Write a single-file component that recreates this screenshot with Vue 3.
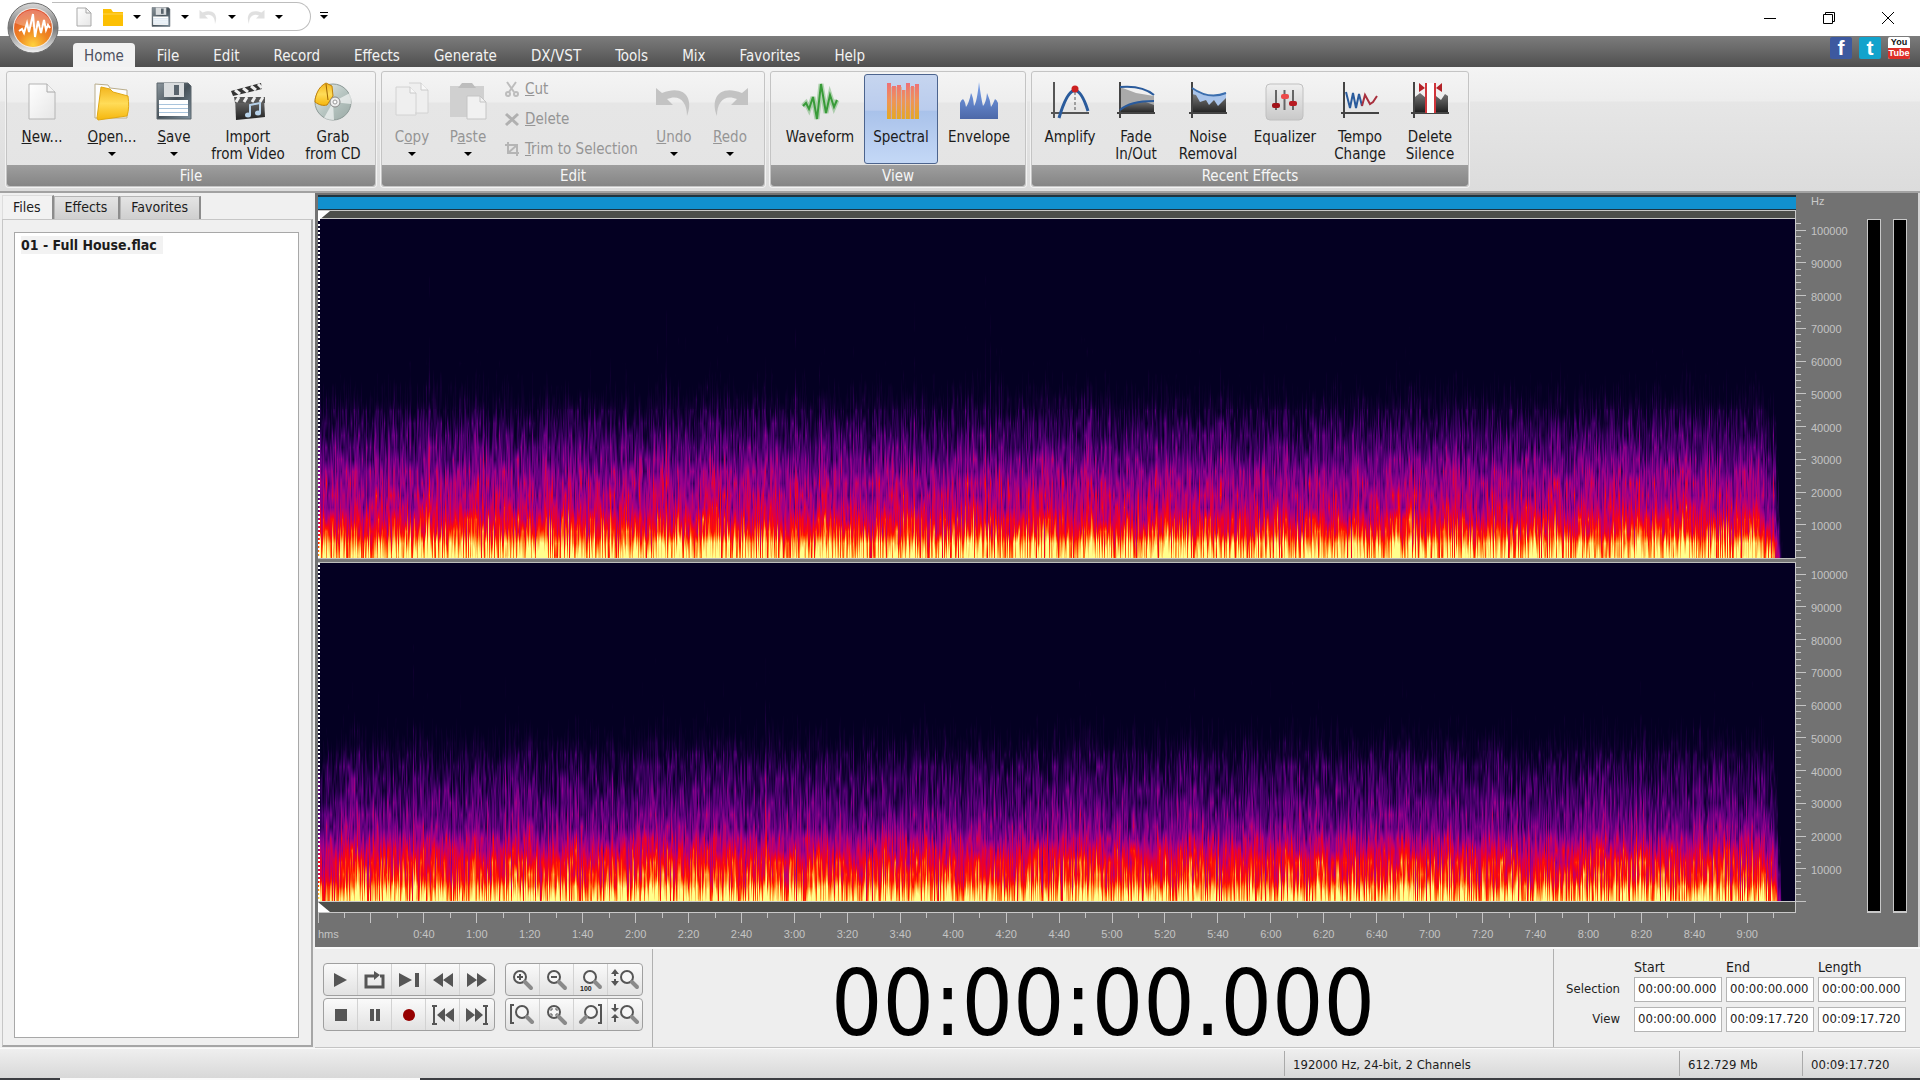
<script setup>
import { onBeforeUnmount, onMounted, ref } from 'vue'

const icons = {
  page: '<path d="M6 2h18l8 8v27H6z" fill="url(#g-paper)" stroke="#b4b4b4"/><path d="M24 2v8h8" fill="#f4f4f4" stroke="#a8a8a8"/>',
  folder: '<path d="M2 2l13 1 2 3 17 2v28H2z" fill="#fdfdfd" stroke="#b9ad8c"/><path d="M4 36L8 5l9 2 3 3 15 4c1 8 1 14-1 20L5 38z" fill="url(#g-gold)" stroke="#e0a814"/>',
  save: '<path d="M2 1h31l3 3v33H2z" fill="url(#g-steel)" stroke="#5d666d"/><rect x="9" y="1" width="20" height="14" fill="#d9dcde"/><rect x="19" y="3" width="5" height="10" fill="#59646d"/><rect x="4" y="18" width="29" height="16" fill="#fff"/><path d="M4 22.500h29M4 26.500h29M4 30.500h29" stroke="#a9c4dc"/>',
  film: '<path d="M6 15h29l1 20-29 3z" fill="url(#g-dark)"/><path d="M2 9L32 1l1 6L4 14z" fill="#333"/><path d="M6 8l5 4M14 6l5 4M22 4l5 4M29 2l4 4" stroke="#eee" stroke-width="3"/><path d="M5 15h31v6H6z" fill="#555"/><path d="M10 15l-3 5M18 15l-3 5M26 15l-3 5M34 15l-3 5" stroke="#eee" stroke-width="3"/><path d="M21 33V23l10-2v10" fill="none" stroke="#b7d2ea" stroke-width="2"/><ellipse cx="19" cy="33" rx="3" ry="2.500" fill="#b7d2ea"/><ellipse cx="29" cy="31" rx="3" ry="2.500" fill="#b7d2ea"/>',
  disc: '<circle cx="19" cy="20" r="18" fill="url(#g-disc)" stroke="#8d9a97"/><path d="M19 20L36 11a18 18 0 0 1 1 11zM19 20L10 36a18 18 0 0 0 10 2z" fill="#fff" opacity=".6"/><path d="M3 11C5 6 8 3 12 1l6 3 1 10-6 9c-4 1-8 0-12-3 0-4 1-6 2-9z" fill="url(#g-gold)" stroke="#c18209"/><path d="M12 2l2 16" stroke="#9c6503"/><circle cx="21" cy="20" r="5" fill="#eee" stroke="#888"/><circle cx="21" cy="20" r="2" fill="#fff" stroke="#999"/>',
  copy: '<path d="M3 5h14l6 6v22H3zM16 1h12l7 7v23H22" fill="#efefef" stroke="#d2d2d2"/><path d="M17 5v6h6M28 1v7h7" fill="#f8f8f8" stroke="#cacaca"/>',
  paste: '<path d="M1 4h34v31H1z" fill="#d0d0d0"/><path d="M9 6l4-5h10l4 5z" fill="#bdbdbd"/><path d="M18 14h13l6 6v17H18z" fill="#f1f1f1" stroke="#c5c5c5"/><path d="M31 14v6h6" fill="none" stroke="#c5c5c5"/>',
  undo: '<path d="M1 6v17h17l-6-6c12-5 20 2 20 17 7-17-2-32-25-23z" fill="#c3c3c3"/>',
  redo: '<path d="M37 6v17H20l6-6C14 12 6 19 6 34-1 17 8 2 31 11z" fill="#c3c3c3"/>',
  cut: '<path d="M3 1l7 10M12 1L5 11" stroke="#bdbdbd" stroke-width="2"/><circle cx="4" cy="13" r="2" fill="none" stroke="#bdbdbd" stroke-width="2"/><circle cx="12" cy="13" r="2" fill="none" stroke="#bdbdbd" stroke-width="2"/>',
  cross: '<path d="M2 3l12 11M14 3L2 14" stroke="#b0b0b0" stroke-width="3"/>',
  trim: '<path d="M1 4h12v11M4 1v11h11M4 12l9-8" fill="none" stroke="#b5b5b5" stroke-width="2"/>',
  waveform: '<path d="M2 24l3-3 3 6 4-12 4 22L20 2l5 29 4-18 4 12 3-7" fill="none" stroke="#3f9f3f" stroke-width="5" opacity=".35"/><path d="M2 24l3-3 3 6 4-12 4 22L20 2l5 29 4-18 4 12 3-7" fill="none" stroke="#389b38" stroke-width="2"/>',
  spectral: '<path d="M5 1h4v36H5zM10 4h4v33h-4zM15 3h4v34h-4zM20 8h3v29h-3zM24 1h4v36h-4zM29 4h3v33h-3zM33 2h4v35h-4z" fill="url(#g-heat)"/><path d="M9 5v32M14 5v32M19 5v32M23 8v29M28 5v32M32 5v32" stroke="#e0956c"/>',
  envelope: '<path d="M0 37V21q1-3 3-4 2 2 3 8 3-4 5-14 2 3 3 13 3-4 5-24 2 16 4 24 3-3 4-13 3 6 4 14 2-3 4-8 2 1 3 4v16z" fill="url(#g-blue)"/>',
  amplify: '<path d="M3 0v36M0 31h38" stroke="#555" stroke-width="2"/><path d="M8 36Q23-15 37 29" fill="none" stroke="#2a5b9c" stroke-width="3"/><path d="M24 10v20" stroke="#555" stroke-dasharray="3 2"/><circle cx="24" cy="7" r="3.500" fill="#cc2020"/>',
  fade: '<path d="M3 5l16 6 18 3v17H3z" fill="#aaa"/><path d="M3 28l10-6 13-3 11 4v8H3z" fill="url(#g-dark)"/><path d="M3 0v36M0 31h38" stroke="#444" stroke-width="2"/><path d="M3 5q22-2 34 8M3 28q10-9 34-9" fill="none" stroke="#2a5b9c" stroke-width="2"/>',
  noise: '<path d="M3 7q16 12 34 3v20H3z" fill="#a9c4ea"/><path d="M3 12l4 1 4 7 6-2 3 5 5-5 4 6 8-8v15H3z" fill="url(#g-dark)"/><path d="M3 0v36M0 31h38" stroke="#444" stroke-width="2"/><path d="M3 6q17 12 34 5" fill="none" stroke="#3b6eae" stroke-width="2"/>',
  equalizer: '<rect x="0" y="2" width="37" height="36" rx="4" fill="url(#g-plate)" stroke="#c0c0c0"/><path d="M10 8v20M18.500 8v20M27 8v20" stroke="#666" stroke-width="2"/><rect x="6" y="21" width="8" height="5" rx="2" fill="#a11219"/><rect x="15" y="12" width="8" height="5" rx="2" fill="#ec4a4a"/><rect x="23" y="19" width="8" height="5" rx="2" fill="#b81b22"/>',
  tempo: '<path d="M3 0v36M0 31h38" stroke="#444" stroke-width="2"/><path d="M5 10l4 16 3-15 3 15 3-14 3 12" fill="none" stroke="#2a5b9c" stroke-width="2"/><path d="M21 24l3-11 5 9 3-2 4-6" fill="none" stroke="#a8303e" stroke-width="2"/>',
  silence: '<path d="M4 15l5-4 6 5v14H4zM25 14l5 4 4-6 3 2v16H25z" fill="url(#g-dark)"/><path d="M3 0v36M0 31h38" stroke="#444" stroke-width="2"/><path d="M14 1v30h11V1" fill="#fff"/><path d="M15 1v30M24 1v30" stroke="#d0353b" stroke-width="2"/><path d="M8 1l6 5-6 4zM31 1l-6 5 6 4z" fill="#b32228"/>',
  play: '<path d="M3 4l13 7-13 7z"/>',
  loop: '<path d="M5 7H1v11h17V7h-3" fill="none" stroke="#555" stroke-width="3"/><path d="M5 7h6" stroke="#555" stroke-width="3"/><path d="M9 2l6 4-6 5z"/>',
  playend: '<path d="M0 4l13 7-13 7zM16 4h4v14h-4z"/>',
  rewind: '<path d="M10 4v14L0 11zM20 4v14l-10-7z"/>',
  forward: '<path d="M0 4v14l10-7zM10 4v14l10-7z"/>',
  stop: '<path d="M4 5h12v12H4z"/>',
  pause: '<path d="M5 5h4v12H5zM11 5h4v12h-4z"/>',
  record: '<circle cx="10" cy="11" r="6" fill="#960000"/>',
  tostart: '<path d="M12 4v14l-8-7zM21 4v14l-9-7z"/><path d="M-1 2h5M-1 20h5M1 2v18" stroke="#555" stroke-width="2"/>',
  toend: '<path d="M-1 4v14l9-7zM8 4v14l8-7z"/><path d="M16 2h5M16 20h5M19 2v18" stroke="#555" stroke-width="2"/>',
  zoomin: '<circle cx="7" cy="8" r="6" class="lens"/><path d="M4 8h6M7 5v6" stroke="#555" stroke-width="2"/><path d="M12 13l6 6" class="grip"/>',
  zoomout: '<circle cx="7" cy="8" r="6" class="lens"/><path d="M4 8h6" stroke="#555" stroke-width="2"/><path d="M12 13l6 6" class="grip"/>',
  zoom100: '<circle cx="9" cy="8" r="6" class="lens"/><path d="M14 13l5 5" class="grip"/><text x="-1" y="22" font-size="7" font-weight="bold" font-family="Liberation Sans, sans-serif" fill="#222">100</text>',
  zoomv: '<circle cx="12" cy="8" r="6" class="lens"/><path d="M17 13l5 5" class="grip"/><path d="M0 0l4 5H1v2h-2V5h-3zM0 17l4-5H1v-2h-2v2h-3z"/>',
  zoomsel: '<circle cx="9" cy="8" r="6" class="lens"/><path d="M14 13l5 5" class="grip"/><path d="M1 1h-3v18h3" fill="none" stroke="#555" stroke-width="2"/>',
  zoomfit: '<circle cx="7" cy="8" r="6" class="lens"/><path d="M4 7V5h2M8 5h2v2M10 9v2H8M6 11H4V9" fill="none" stroke="#555"/><path d="M12 13l6 6" class="grip"/>',
  zoomright: '<circle cx="10" cy="8" r="6" class="lens"/><path d="M5 13l-5 5" class="grip"/><path d="M17 1h3v18h-3" fill="none" stroke="#555" stroke-width="2"/>',
  zoomvout: '<circle cx="12" cy="8" r="6" class="lens"/><path d="M17 13l5 5" class="grip"/><path d="M0 8l-4-4h3V0h2v4h3zM0 10l4 4H1v4h-2v-4h-3z"/>',
}

const menus = ['Home', 'File', 'Edit', 'Record', 'Effects', 'Generate', 'DX/VST', 'Tools', 'Mix', 'Favorites', 'Help']

const fileTools = [
  { icon: 'page', key: 'N', text: 'ew...', size: 'w64' },
  { icon: 'folder', key: 'O', text: 'pen...', caret: true, size: 'w76' },
  { icon: 'save', key: 'S', text: 'ave', caret: true, size: 'w48' },
  { icon: 'film', text: 'Import\nfrom Video', size: 'w100' },
  { icon: 'disc', text: 'Grab\nfrom CD', size: 'w70' },
]
const viewTools = [
  { icon: 'waveform', text: 'Waveform', size: 'w88' },
  { icon: 'spectral', text: 'Spectral', size: 'w74', active: true },
  { icon: 'envelope', text: 'Envelope', size: 'w82' },
]
const effectTools = [
  { icon: 'amplify', text: 'Amplify', size: 'w66' },
  { icon: 'fade', text: 'Fade\nIn/Out', size: 'w66' },
  { icon: 'noise', text: 'Noise\nRemoval', size: 'w78' },
  { icon: 'equalizer', text: 'Equalizer', size: 'w76' },
  { icon: 'tempo', text: 'Tempo\nChange', size: 'w74' },
  { icon: 'silence', text: 'Delete\nSilence', size: 'w66' },
]
const smallTools = [
  { icon: 'cut', key: 'C', text: 'ut' },
  { icon: 'cross', key: 'D', text: 'elete' },
  { icon: 'trim', key: 'T', text: 'rim to Selection' },
]

const transport = [
  ['play', 'loop', 'playend', 'rewind', 'forward'],
  ['stop', 'pause', 'record', 'tostart', 'toend'],
]
const zooms = [
  ['zoomin', 'zoomout', 'zoom100', 'zoomv'],
  ['zoomsel', 'zoomfit', 'zoomright', 'zoomvout'],
]

const rows = [
  { name: 'Selection', values: ['00:00:00.000', '00:00:00.000', '00:00:00.000'] },
  { name: 'View', values: ['00:00:00.000', '00:09:17.720', '00:09:17.720'] },
]

// Rulers
const span = 558.4
const timeTicks = Array.from({ length: 56 }, (_, i) => {
  const s = i * 10
  const major = i % 2 === 0
  return {
    x: `${(s / span) * 100}%`,
    major,
    label: major && s >= 40 && s <= 540 ? `${Math.floor(s / 60)}:${String(s % 60).padStart(2, '0')}` : '',
  }
})
const topHz = 103400
const hzTicks = Array.from({ length: 52 }, (_, i) => {
  const hz = i * 2000
  return {
    y: `${(1 - hz / topHz) * 100}%`,
    major: hz % 10000 === 0,
    label: hz && hz % 10000 === 0 ? String(hz) : '',
  }
})

// Spectrogram rendering
const palette = [
  [0, 4, 0, 34], [0.12, 16, 0, 48], [0.25, 50, 0, 88], [0.38, 98, 0, 128], [0.5, 152, 0, 140],
  [0.6, 200, 0, 100], [0.68, 238, 0, 40], [0.75, 255, 20, 0], [0.83, 255, 110, 20],
  [0.91, 255, 190, 80], [1, 255, 255, 140],
]
const table = Array.from({ length: 256 }, (_, i) => {
  const v = i / 255
  let k = 1
  while (k < palette.length - 1 && palette[k][0] < v) k++
  const a = palette[k - 1]
  const b = palette[k]
  const t = (v - a[0]) / (b[0] - a[0])
  return [1, 2, 3].map((c) => a[c] + (b[c] - a[c]) * t)
})
const profiles = [
  [[0, 0.97], [14, 0.87], [22, 0.76], [34, 0.67], [50, 0.56], [78, 0.48], [105, 0.33], [135, 0.18], [160, 0.03], [190, -0.12], [338, -0.3]],
  [[0, 0.97], [10, 0.88], [20, 0.76], [40, 0.68], [56, 0.56], [72, 0.42], [100, 0.31], [135, 0.19], [162, 0.03], [190, -0.12], [338, -0.3]],
]
function level(profile, h) {
  let k = 1
  while (k < profile.length - 1 && profile[k][0] < h) k++
  const a = profile[k - 1]
  const b = profile[k]
  return a[1] + ((b[1] - a[1]) * (h - a[0])) / (b[0] - a[0])
}
function paint(canvas, channel) {
  const w = canvas.clientWidth
  const h = canvas.clientHeight
  if (!w || !h) return
  canvas.width = w
  canvas.height = h
  let seed = 7919 * (channel + 3)
  const rnd = () => {
    seed = (seed * 1664525 + 1013904223) >>> 0
    return seed / 4294967296
  }
  const ctx = canvas.getContext('2d')
  const img = ctx.createImageData(w, h)
  const height = Array.from({ length: h }, (_, y) => ((h - 1 - y) * 338) / h)
  const base = height.map((v) => level(profiles[channel], v))
  const low = height.map((v) => Math.max(0, 1 - v / 60))
  const bands = Math.ceil(h / 12) + 2
  const end = 0.985
  let slow = 0
  let previous = null
  for (let x = 0; x < w; x++) {
    slow = slow * 0.9 + (rnd() - 0.5) * 0.03
    const gain = slow + (rnd() - 0.5) * 0.15 - Math.max(0, 0.06 - x / 400)
    const bass = (rnd() - 0.5) * 0.34
    const fresh = Array.from({ length: bands }, () => (rnd() + rnd() - 1) * 0.21)
    const noise = previous ? fresh.map((v, i) => v * 0.85 + previous[i] * 0.25) : fresh
    previous = fresh
    const f = x / w
    const cut = f > end ? (f - end) * 130 : f > end - 0.01 ? (f - end + 0.01) * 9 : 0
    const spike = rnd() > 0.99 ? 0.1 : 0
    for (let y = 0; y < h; y++) {
      const p = y / 12
      const i = Math.floor(p)
      const n = noise[i] + (noise[i + 1] - noise[i]) * (p - i)
      const v = base[y] + (base[y] < 0.1 ? 0.7 : 1 - low[y] * 0.5) * n + gain + bass * low[y] + spike - cut
      const c = table[Math.max(0, Math.min(255, Math.round(v * 255)))]
      const o = (y * w + x) * 4
      img.data[o] = c[0]
      img.data[o + 1] = c[1]
      img.data[o + 2] = c[2]
      img.data[o + 3] = 255
    }
  }
  ctx.putImageData(img, 0, 0)
}
const first = ref(null)
const second = ref(null)
const paintAll = () => {
  paint(first.value, 0)
  paint(second.value, 1)
}
onMounted(() => {
  paintAll()
  window.addEventListener('resize', paintAll)
})
onBeforeUnmount(() => window.removeEventListener('resize', paintAll))
</script>

<template>
  <div class="window">
    <svg class="defs" aria-hidden="true">
      <defs>
        <linearGradient id="g-paper" x2="1" y2="1"><stop stop-color="#fff" /><stop offset="1" stop-color="#e6e6e6" /></linearGradient>
        <linearGradient id="g-gold" x2="0" y2="1"><stop stop-color="#f3b51e" /><stop offset=".5" stop-color="#ffdc58" /><stop offset="1" stop-color="#f5b60c" /></linearGradient>
        <linearGradient id="g-steel" x2="1" y2="1"><stop stop-color="#8d979e" /><stop offset=".5" stop-color="#465159" /><stop offset="1" stop-color="#7d909e" /></linearGradient>
        <linearGradient id="g-dark" x2="0" y2="1"><stop stop-color="#777" /><stop offset="1" stop-color="#222" /></linearGradient>
        <linearGradient id="g-disc" x2="1" y2="1"><stop stop-color="#eef1f0" /><stop offset=".5" stop-color="#b8c6c2" /><stop offset="1" stop-color="#9aa9a5" /></linearGradient>
        <linearGradient id="g-heat" x2="0" y2="1"><stop stop-color="#ee7077" /><stop offset=".5" stop-color="#f09455" /><stop offset="1" stop-color="#e3aa1f" /></linearGradient>
        <linearGradient id="g-blue" x2="0" y2="1"><stop stop-color="#7ba4ef" /><stop offset="1" stop-color="#4c68a8" /></linearGradient>
        <linearGradient id="g-plate" x2="0" y2="1"><stop stop-color="#efefef" /><stop offset="1" stop-color="#c9c9c9" /></linearGradient>
        <linearGradient id="g-rim" x2="0" y2="1"><stop stop-color="#d8d8d8" /><stop offset=".5" stop-color="#777" /><stop offset="1" stop-color="#f4f4f4" /></linearGradient>
        <radialGradient id="g-orb" cy=".95" r=".9"><stop stop-color="#ffd23c" /><stop offset=".45" stop-color="#ef8622" /><stop offset="1" stop-color="#e0502c" /></radialGradient>
      </defs>
    </svg>

    <header class="titlebar">
      <button class="orb" aria-label="Application menu">
        <svg viewBox="0 0 52 52" width="52" height="52">
          <circle cx="26" cy="26" r="25" fill="url(#g-rim)" stroke="#6e6e6e" />
          <circle cx="26" cy="26" r="20" fill="#f3e9e2" />
          <circle cx="26" cy="26" r="19" fill="url(#g-orb)" />
          <path d="M8 21a19 19 0 0 1 36 0q-18 8-36 0z" fill="#fff" opacity=".28" />
          <path d="M12 29l3-2 2 4 3-10 2 9 4-18 2 23 3-16 3 12 3-13 2 10 2-5 2 3" fill="none" stroke="#fff" stroke-width="2" />
        </svg>
      </button>
      <div class="quick">
        <button aria-label="New"><svg width="18" height="20"><path d="M2 1h9l5 5v13H2z" fill="url(#g-paper)" stroke="#a9a9a9" /><path d="M11 1v5h5" fill="none" stroke="#a9a9a9" /></svg></button>
        <button aria-label="Open"><svg viewBox="0 0 20 18" width="20" height="18"><path d="M0 1h8l2 3h10v14H0z" fill="#fcc004" /><path d="M0 6h20" stroke="#ffd34d" /></svg></button>
        <i class="caret"></i>
        <button aria-label="Save"><svg viewBox="0 0 38 38" width="20" height="20" v-html="icons.save"></svg></button>
        <i class="caret"></i>
        <button class="faint" aria-label="Undo"><svg viewBox="0 0 38 38" width="19" height="19" v-html="icons.undo"></svg></button>
        <i class="caret"></i>
        <button class="faint" aria-label="Redo"><svg viewBox="0 0 38 38" width="19" height="19" v-html="icons.redo"></svg></button>
        <i class="caret"></i>
      </div>
      <button class="more" aria-label="Customize"><i class="bar"></i><i class="caret"></i></button>
      <div class="winctl">
        <button aria-label="Minimize"><svg width="12" height="12"><path d="M0 6.500h12" stroke="#000" /></svg></button>
        <button aria-label="Restore"><svg width="12" height="12" fill="none" stroke="#000"><path d="M.5 2.500h9v9h-9zM2.500 2.500v-2h9v9h-2" /></svg></button>
        <button aria-label="Close"><svg width="12" height="12" stroke="#000"><path d="M0 0l12 12M12 0L0 12" /></svg></button>
      </div>
    </header>

    <nav class="menubar">
      <button v-for="(m, i) in menus" :key="m" :class="{ current: i === 0 }">{{ m }}</button>
      <div class="social">
        <a href="#facebook" class="fb">f</a>
        <a href="#twitter" class="tw">t</a>
        <a href="#youtube" class="yt"><span>You</span><b>Tube</b></a>
      </div>
    </nav>

    <section class="ribbon">
      <div class="group">
        <div class="tools files">
          <button v-for="t in fileTools" :key="t.icon" class="tool" :class="t.size">
            <svg viewBox="0 0 38 38" v-html="icons[t.icon]"></svg>
            <span><u v-if="t.key">{{ t.key }}</u>{{ t.text }}</span>
            <i v-if="t.caret" class="caret"></i>
          </button>
        </div>
        <h2>File</h2>
      </div>
      <div class="group">
        <div class="tools disabled">
          <button class="tool w54"><svg viewBox="0 0 38 38" v-html="icons.copy"></svg><span>C<u>o</u>py</span><i class="caret"></i></button>
          <button class="tool w58"><svg viewBox="0 0 38 38" v-html="icons.paste"></svg><span>P<u>a</u>ste</span><i class="caret"></i></button>
          <div class="stack">
            <button v-for="t in smallTools" :key="t.icon">
              <svg viewBox="0 0 16 16" width="16" height="16" v-html="icons[t.icon]"></svg><span><u>{{ t.key }}</u>{{ t.text }}</span>
            </button>
          </div>
          <button class="tool w54"><svg viewBox="0 0 38 38" v-html="icons.undo"></svg><span><u>U</u>ndo</span><i class="caret"></i></button>
          <button class="tool w58"><svg viewBox="0 0 38 38" v-html="icons.redo"></svg><span><u>R</u>edo</span><i class="caret"></i></button>
        </div>
        <h2>Edit</h2>
      </div>
      <div class="group">
        <div class="tools">
          <button v-for="t in viewTools" :key="t.icon" class="tool" :class="[t.size, { active: t.active }]">
            <svg viewBox="0 0 38 38" v-html="icons[t.icon]"></svg>
            <span>{{ t.text }}</span>
          </button>
        </div>
        <h2>View</h2>
      </div>
      <div class="group">
        <div class="tools">
          <button v-for="t in effectTools" :key="t.icon" class="tool" :class="t.size">
            <svg viewBox="0 0 38 38" v-html="icons[t.icon]"></svg>
            <span>{{ t.text }}</span>
          </button>
        </div>
        <h2>Recent Effects</h2>
      </div>
    </section>

    <main class="main">
      <aside class="side">
        <div class="tabs">
          <button class="on">Files</button>
          <button>Effects</button>
          <button>Favorites</button>
        </div>
        <div class="panel">
          <ul class="list">
            <li>01 - Full House.flac</li>
          </ul>
        </div>
      </aside>

      <section class="editor">
        <div class="view">
          <div class="overview"></div>
          <div class="hz">Hz</div>
          <div class="strip top"></div>
          <div class="channel"><canvas ref="first"></canvas></div>
          <div class="divider"></div>
          <div class="channel"><canvas ref="second"></canvas></div>
          <svg v-for="n in 2" :key="n" class="scale" :class="'s' + n">
            <template v-for="t in hzTicks" :key="t.y">
              <line x1="0" :x2="t.major ? 10 : 5" :y1="t.y" :y2="t.y" />
              <text v-if="t.label" x="15" dy="5" :y="t.y">{{ t.label }}</text>
            </template>
          </svg>
          <div class="strip bottom"></div>
          <div class="meters"><i></i><i></i></div>
          <svg class="ruler">
            <template v-for="t in timeTicks" :key="t.x">
              <line :x1="t.x" :x2="t.x" y1="0" :y2="t.major ? 10 : 5" />
              <text v-if="t.label" :x="t.x" y="25" text-anchor="middle">{{ t.label }}</text>
            </template>
            <text x="0" y="25">hms</text>
          </svg>
        </div>

        <div class="controls">
          <div class="pads">
            <div class="pad">
              <div v-for="(r, i) in transport" :key="i" class="keys">
                <button v-for="k in r" :key="k" :aria-label="k"><svg width="20" height="22" v-html="icons[k]"></svg></button>
              </div>
            </div>
            <div class="pad">
              <div v-for="(r, i) in zooms" :key="i" class="keys">
                <button v-for="k in r" :key="k" :aria-label="k"><svg width="20" height="22" v-html="icons[k]"></svg></button>
              </div>
            </div>
          </div>
          <div class="clock">00:00:00.000</div>
          <table class="times">
            <thead>
              <tr><th></th><th scope="col">Start</th><th scope="col">End</th><th scope="col">Length</th></tr>
            </thead>
            <tbody>
              <tr v-for="r in rows" :key="r.name">
                <th scope="row">{{ r.name }}</th>
                <td v-for="(v, i) in r.values" :key="i"><input type="text" :value="v" :aria-label="r.name + ' ' + ['start', 'end', 'length'][i]" /></td>
              </tr>
            </tbody>
          </table>
        </div>
      </section>
    </main>

    <footer class="status">
      <span class="format">192000 Hz, 24-bit, 2 Channels</span>
      <span class="size">612.729 Mb</span>
      <span class="total">00:09:17.720</span>
    </footer>
    <div class="taskbar"></div>
  </div>
</template>

<style>
body {
  background: #eee;
}
</style>

<style scoped>
.window {
  display: flex;
  flex-direction: column;
  min-height: 100vh;
  color: #1c1c1c;
  font: 15px/17px "DejaVu Sans Condensed", "DejaVu Sans", sans-serif;
}
.window *,
.window *::before {
  box-sizing: border-box;
}
button {
  padding: 0;
  border: 0;
  background: none;
  color: inherit;
  font: inherit;
}
svg {
  display: block;
  overflow: visible;
}
.defs {
  position: absolute;
  width: 0;
  height: 0;
}
.caret {
  display: block;
  width: 0;
  height: 0;
  border: 4px solid transparent;
  border-top-color: #000;
  border-bottom: 0;
}

.titlebar {
  display: flex;
  align-items: flex-start;
  height: 36px;
  padding-left: 7px;
  background: #fff;
}
.orb {
  position: relative;
  z-index: 2;
  width: 52px;
  height: 52px;
  margin-top: 2px;
}
.quick {
  display: flex;
  align-items: center;
  gap: 10px;
  height: 29px;
  margin: 2px 0 0 -7px;
  padding: 0 27px 0 23px;
  border: 1px solid #bdbdbd;
  border-left: 0;
  border-radius: 0 15px 15px 0;
}
.quick .faint {
  opacity: 0.5;
}
.more {
  display: grid;
  gap: 2px;
  margin: 12px 0 0 9px;
}
.more .bar {
  height: 1px;
  background: #000;
}
.winctl {
  display: flex;
  gap: 47px;
  margin: 12px 26px 0 auto;
}

.menubar {
  display: flex;
  align-items: flex-end;
  height: 31px;
  padding-left: 73px;
  background: linear-gradient(#7c7c7c, #666 50%, #4f4f4f);
  color: #f2f2f2;
}
.menubar button {
  height: 24px;
  padding: 2px 17px 0;
}
.menubar .current {
  margin-right: 5px;
  padding: 2px 11px 0;
  border-radius: 4px 4px 0 0;
  background: #f2f2f2;
  color: #4c5060;
}
.social {
  display: flex;
  gap: 7px;
  align-self: flex-start;
  margin: 1px 10px 0 auto;
}
.social a {
  width: 22px;
  height: 22px;
  overflow: hidden;
  border-radius: 2px;
  color: #fff;
  font: bold 21px/22px "Liberation Sans", sans-serif;
  text-align: center;
  text-decoration: none;
}
.fb {
  background: #3d599f;
}
.tw {
  background: #12a3cc;
}
.social .yt {
  background: #fff;
  color: #111;
  font-size: 9px;
  line-height: 11px;
}
.yt span,
.yt b {
  display: block;
}
.yt b {
  background: #dd2f27;
  color: #fff;
}

.ribbon {
  display: flex;
  align-items: flex-start;
  gap: 5px;
  height: 126px;
  padding: 4px 6px 0;
  border-bottom: 2px solid #a2a2a2;
  background: linear-gradient(#f4f4f4, #ededed 34px, #e6e6e6 35px, #dcdcdc);
}
.group {
  height: 116px;
  border: 1px solid #c4c4c4;
  border-radius: 3px;
  background: linear-gradient(#f4f4f4, #eee 30px, #e6e6e6 31px, #e4e4e4);
  box-shadow: 0 0 0 1px #f2f2f2;
}
.tools {
  display: flex;
  height: 93px;
  padding: 2px 5px 1px;
}
.tools.files {
  padding: 2px 7px 1px 3px;
}
.tools.disabled {
  padding: 2px 5px 1px 3px;
  color: #959595;
}
.tool {
  display: flex;
  flex-direction: column;
  align-items: center;
  height: 90px;
  padding-top: 8px;
  border-radius: 3px;
  line-height: 17px;
  white-space: pre-line;
}
.tool svg {
  flex: none;
  width: 38px;
  height: 38px;
  margin-bottom: 9px;
}
.tool .caret {
  margin-top: 6px;
}
.tool.active {
  border: 1px solid #4c648e;
  padding-top: 7px;
  background: linear-gradient(#c6d5ef, #bacced 40%, #a9c2ea 41%, #c4d8f6);
}
.w48 { width: 48px; }
.w54 { width: 54px; }
.w58 { width: 58px; }
.w64 { width: 64px; }
.w66 { width: 66px; }
.w70 { width: 70px; }
.w74 { width: 74px; }
.w76 { width: 76px; }
.w78 { width: 78px; }
.w82 { width: 82px; }
.w88 { width: 88px; }
.w100 { width: 100px; }
.stack {
  display: flex;
  flex-direction: column;
  width: 150px;
  padding-left: 7px;
}
.stack button {
  display: flex;
  align-items: center;
  gap: 5px;
  height: 30px;
  white-space: nowrap;
}
.group h2 {
  height: 21px;
  margin: 0;
  border-radius: 0 0 3px 3px;
  background: linear-gradient(#9e9e9e, #858585);
  color: #f6f6f6;
  font: inherit;
  line-height: 22px;
  text-align: center;
}

.main {
  display: flex;
  flex: 1;
}
.side {
  display: flex;
  flex-direction: column;
  width: 313px;
  padding: 2px 0 0 2px;
  background: #f0f0f0;
  font-size: 14px;
}
.tabs {
  display: flex;
  align-items: flex-end;
  height: 24px;
}
.tabs button {
  height: 23px;
  padding: 0 11px 1px 10px;
  border: 1px solid #b4b4b4;
  border-right: 2px solid #8c8c8c;
  border-bottom: 0;
  background: linear-gradient(#e4e4e4, #cfcfcf);
}
.tabs .on {
  height: 24px;
  border-color: #ddd #8c8c8c #ddd #ddd;
  background: #f2f2f2;
}
.panel {
  display: flex;
  flex: 1;
  padding: 12px 12px 7px 11px;
  border: 1px solid #c6c6c6;
  border-width: 1px 2px 2px 1px;
  border-right-color: #a6a6a6;
  border-bottom-color: #a6a6a6;
  margin-bottom: 1px;
}
.list {
  flex: 1;
  margin: 0;
  padding: 3px 6px;
  border: 1px solid #a8a8a8;
  background: #fff;
  list-style: none;
}
.list li {
  width: fit-content;
  padding-right: 6px;
  background: #f2f2f2;
  font-weight: bold;
  line-height: 18px;
}

.editor {
  display: flex;
  flex: 1;
  flex-direction: column;
  min-width: 0;
  padding-left: 2px;
}
.view {
  display: grid;
  flex: 1;
  grid-template: 15px 9px minmax(0, 1fr) 5px minmax(0, 1fr) 12px 34px / minmax(0, 1fr) 67px 55px;
  padding: 2px 0 0 3px;
  border-right: 2px solid #d4d4d4;
  background: #727272;
}
.overview {
  grid-area: 1 / 1;
  border: solid #1d3340;
  border-width: 2px 0 1px;
  background: #1190ce;
}
.hz {
  grid-area: 1 / 2;
  padding-left: 15px;
  color: #c9c9c9;
  font: 11px/13px "Liberation Sans", sans-serif;
}
.strip {
  position: relative;
  border: solid #c8c8c8;
  border-width: 1px 1px 1px 0;
  background: #4d4e4b;
}
.strip.top {
  grid-area: 2 / 1;
}
.strip.bottom {
  grid-area: 6 / 1;
}
.strip::before {
  position: absolute;
  top: 0;
  left: 0;
  width: 12px;
  height: 10px;
  background: #fff;
  clip-path: polygon(0 0, 100% 0, 0 100%);
  content: "";
}
.strip.bottom::before {
  clip-path: polygon(0 0, 100% 100%, 0 100%);
}
.channel {
  position: relative;
  grid-column: 1;
  min-height: 0;
  border-right: 1px solid #c8c8c8;
  background: #040022;
}
.channel::before {
  position: absolute;
  z-index: 1;
  top: 0;
  bottom: 0;
  left: 0;
  border-left: 2px dotted #fff;
  content: "";
}
.channel canvas {
  position: absolute;
  width: 100%;
  height: 100%;
}
.divider {
  grid-column: 1;
  border: solid #bdbdbd;
  border-width: 1px 0;
  background: #777;
}
.scale {
  grid-column: 2;
  width: 100%;
  height: 100%;
}
.s1 {
  grid-row: 3;
}
.s2 {
  grid-row: 5;
}
.scale line,
.ruler line {
  stroke: #c4c4c4;
  shape-rendering: crispEdges;
}
.scale text,
.ruler text {
  fill: #c4c4c4;
  font: 11px "Liberation Sans", sans-serif;
}
.ruler {
  grid-area: 7 / 1;
  width: 100%;
  height: 34px;
}
.meters {
  display: flex;
  grid-area: 3 / 3 / 7 / 4;
  gap: 12px;
  padding-left: 4px;
}
.meters i {
  width: 14px;
  border: 1px solid #c8c8c8;
  border-width: 1px 1px 2px;
  background: #000;
}

.controls {
  display: flex;
  height: 101px;
  border-top: 2px solid #fafafa;
  border-bottom: 1px solid #c4c4c4;
  background: #eee;
}
.pads {
  display: flex;
  gap: 10px;
  width: 338px;
  padding: 14px 0 0 8px;
  border-right: 1px solid #b0b0b0;
}
.pad {
  display: grid;
  gap: 2px;
  align-content: start;
}
.keys {
  display: flex;
  border: 1px solid #9f9f9f;
  border-radius: 4px;
  background: linear-gradient(#fafafa, #e2e2e2);
}
.keys button {
  display: grid;
  place-items: center;
  width: 34px;
  height: 31px;
  border-right: 1px solid #d2d2d2;
}
.keys button:last-child {
  border-right: 0;
}
.keys svg {
  fill: #555;
}
.keys :deep(.lens) {
  fill: #f6f6f6;
  stroke: #555;
  stroke-width: 2;
}
.keys :deep(.grip) {
  stroke: #8a8a8a;
  stroke-width: 4;
  stroke-linecap: round;
}
.clock {
  flex: 1;
  color: #000;
  font: 90px/110px "DejaVu Sans Condensed", "DejaVu Sans", sans-serif;
  text-align: center;
}
.times {
  align-self: stretch;
  width: 367px;
  padding: 8px 10px 0 0;
  border-left: 1px solid #b0b0b0;
  border-spacing: 4px 0;
  font-size: 13px;
  table-layout: fixed;
}
.times th {
  padding: 0;
  font-size: 14px;
  font-weight: normal;
  text-align: left;
  line-height: 20px;
}
.times tbody th {
  padding: 2px 10px 0 0;
  font-size: 13px;
  text-align: right;
}
.times th:first-child {
  width: 72px;
}
.times tbody th,
.times td {
  height: 30px;
  vertical-align: top;
}
.times tbody tr:last-child th,
.times tbody tr:last-child td {
  height: 40px;
}
.times td {
  padding: 0;
}
.times input {
  display: block;
  width: 100%;
  height: 25px;
  padding: 0 0 2px 3px;
  border: 1px solid #b4b4b4;
  background: #fff;
  color: inherit;
  font: inherit;
}

.status {
  display: flex;
  height: 30px;
  padding: 2px 0;
  border-top: 1px solid #fafafa;
  background: linear-gradient(#efefef, #d8d8d8);
  font-size: 13px;
  line-height: 28px;
}
.status span {
  padding-left: 8px;
  border-left: 1px solid #aaa;
}
.format {
  width: 395px;
  margin-left: auto;
}
.size {
  width: 123px;
}
.total {
  width: 118px;
}
.taskbar {
  height: 2px;
  background: linear-gradient(90deg, #3c3e42 60px, #fafafa 60px, #fafafa 420px, #3c3e42 420px);
}
</style>
